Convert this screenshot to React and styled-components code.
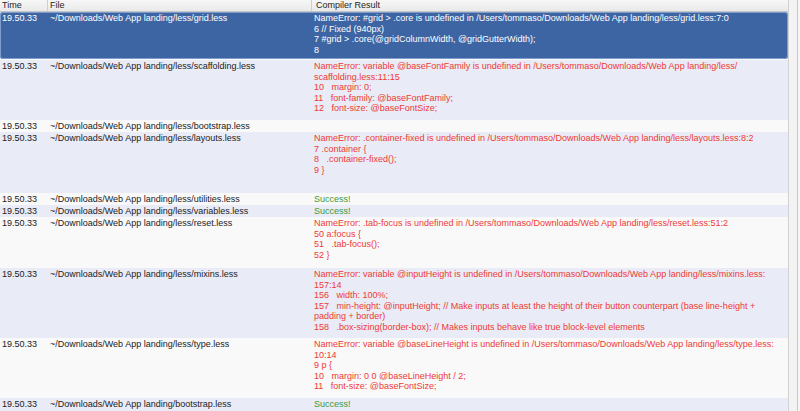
import React from 'react'
import styled, { createGlobalStyle } from 'styled-components'

const GlobalStyle = createGlobalStyle`
  html, body {
    margin: 0;
    padding: 0;
    overflow: hidden;
    background: #fafafa;
  }
  body {
    font-family: "Liberation Sans", Arial, sans-serif;
    font-size: 9px;
    color: #222;
  }
`

const base = '~/Downloads/Web App landing/'
const home = '/Users/tommaso/Downloads/Web App landing/less/'

const rows = [
  {
    file: 'less/grid.less', h: 47, selected: true, status: 'error',
    lines: [
      `NameError: #grid > .core is undefined in ${home}grid.less:7:0`,
      '6 // Fixed (940px)',
      '7 #grid > .core(@gridColumnWidth, @gridGutterWidth);',
      '8',
    ],
  },
  {
    file: 'less/scaffolding.less', h: 60, status: 'error',
    lines: [
      `NameError: variable @baseFontFamily is undefined in ${home}`,
      'scaffolding.less:11:15',
      '10   margin: 0;',
      '11   font-family: @baseFontFamily;',
      '12   font-size: @baseFontSize;',
    ],
  },
  { file: 'less/bootstrap.less', h: 12, status: 'none', lines: [] },
  {
    file: 'less/layouts.less', h: 61, status: 'error',
    lines: [
      `NameError: .container-fixed is undefined in ${home}layouts.less:8:2`,
      '7 .container {',
      '8   .container-fixed();',
      '9 }',
    ],
  },
  { file: 'less/utilities.less', h: 12, status: 'ok', lines: ['Success!'] },
  { file: 'less/variables.less', h: 12, status: 'ok', lines: ['Success!'] },
  {
    file: 'less/reset.less', h: 51, status: 'error',
    lines: [
      `NameError: .tab-focus is undefined in ${home}reset.less:51:2`,
      '50 a:focus {',
      '51   .tab-focus();',
      '52 }',
    ],
  },
  {
    file: 'less/mixins.less', h: 70, status: 'error',
    lines: [
      `NameError: variable @inputHeight is undefined in ${home}mixins.less:`,
      '157:14',
      '156   width: 100%;',
      '157   min-height: @inputHeight; // Make inputs at least the height of their button counterpart (base line-height +',
      'padding + border)',
      '158   .box-sizing(border-box); // Makes inputs behave like true block-level elements',
    ],
  },
  {
    file: 'less/type.less', h: 60, status: 'error',
    lines: [
      `NameError: variable @baseLineHeight is undefined in ${home}type.less:`,
      '10:14',
      '9 p {',
      '10   margin: 0 0 @baseLineHeight / 2;',
      '11   font-size: @baseFontSize;',
    ],
  },
  { file: 'bootstrap.less', h: 20, status: 'ok', lines: ['Success!'] },
]

export default function App() {
  return (
    <>
      <GlobalStyle />
      <Window>
        <Table>
          <HeaderRow>
            <HeadCell>Time</HeadCell>
            <HeadCell>File</HeadCell>
            <HeadCell $last>Compiler Result</HeadCell>
          </HeaderRow>
          {rows.map((row, i) => (
            <Row key={i} $h={row.h} $alt={i % 2 === 1} $selected={row.selected}>
              <Cell>19.50.33</Cell>
              <Cell>{base + row.file}</Cell>
              <Result $status={row.status} $selected={row.selected}>
                {row.lines.map((line, j) => (
                  <Line key={j}>{line}</Line>
                ))}
              </Result>
            </Row>
          ))}
        </Table>
        <Scroller>
          <ScrollTrack />
        </Scroller>
      </Window>
    </>
  )
}

const Window = styled.div`
  display: flex;
  width: 800px;
  height: 411px;
  overflow: hidden;
`

const Table = styled.div`
  flex: 1;
  display: flex;
  flex-direction: column;
  min-width: 0;
`

const HeaderRow = styled.div`
  display: grid;
  grid-template-columns: 48px 264px 1fr;
  height: 11px;
  flex-shrink: 0;
  background: linear-gradient(#f7f7f7, #e9e9e9);
  border-bottom: 1px solid #c4c4c4;
`

const HeadCell = styled.div`
  padding-left: ${p => (p.$last ? '4px' : '2px')};
  line-height: 11px;
  color: #1e1e1e;
  border-right: ${p => (p.$last ? 'none' : '1px solid #cfcfcf')};
  white-space: nowrap;
  overflow: hidden;
`

const Row = styled.div`
  display: grid;
  grid-template-columns: 48px 264px 1fr;
  flex-shrink: 0;
  height: ${p => p.$h}px;
  box-sizing: border-box;
  padding-top: 1px;
  background: ${p => (p.$selected ? '#3d65a4' : p.$alt ? '#e9ebf6' : '#f9f9f9')};
  color: ${p => (p.$selected ? '#ffffff' : '#222')};
  box-shadow: ${p => (p.$selected ? 'inset 0 0 0 1px #7f9dcc' : 'none')};
  border-radius: ${p => (p.$selected ? '3px' : '0')};
  margin-bottom: ${p => (p.$selected ? '1px' : '0')};
`

const Cell = styled.div`
  padding-left: 2px;
  line-height: 10.5px;
  white-space: nowrap;
  overflow: hidden;
`

const Result = styled.div`
  padding-left: 2px;
  line-height: 10.5px;
  color: ${p => (p.$selected ? '#ffffff' : p.$status === 'ok' ? '#3b9a3b' : '#ee3a35')};
`

const Line = styled.div`
  white-space: pre;
`

const Scroller = styled.div`
  width: 12px;
  flex-shrink: 0;
  display: flex;
  background: #f6f6f6;
  border-left: 1px solid #d2d2d2;
  box-sizing: border-box;
`

const ScrollTrack = styled.div`
  width: 8px;
  border-right: 1px solid #c9c9c9;
  background: #f3f3f3;
`
